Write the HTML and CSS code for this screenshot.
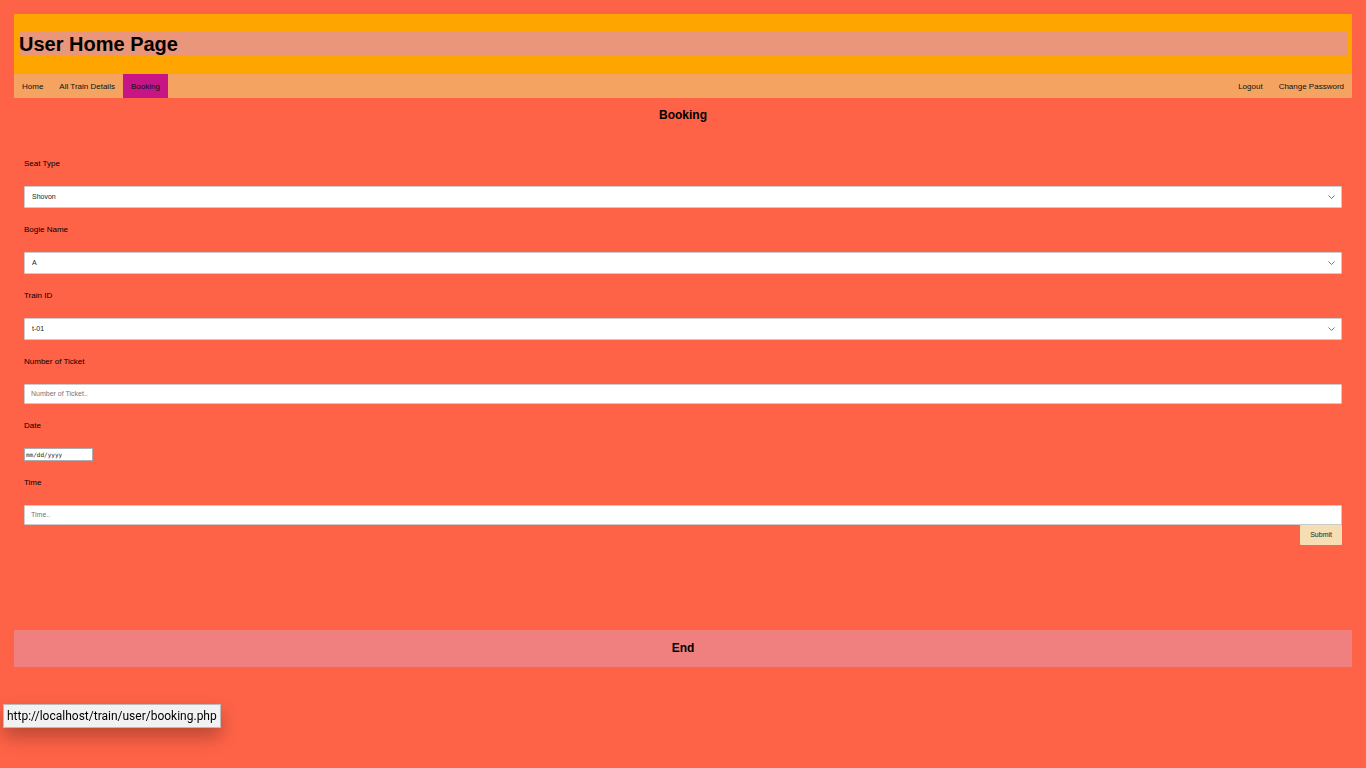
FILE: index.html
```html
<!DOCTYPE html>
<html lang="en">
<head>
<meta charset="utf-8">
<title>User Home Page</title>
<link rel="stylesheet" href="styles.css">
</head>
<body>
<header class="header"><h1 class="header-title">User Home Page</h1></header>
<nav class="nav">
  <a class="nav-link" href="#home">Home</a>
  <a class="nav-link" href="#trains">All Train Details</a>
  <a class="nav-link nav-link-active" href="#booking">Booking</a>
  <a class="nav-link nav-link-end" href="#logout">Logout</a>
  <a class="nav-link" href="#password">Change Password</a>
</nav>
<main>
  <h2 class="title">Booking</h2>
  <form class="form">
    <label class="label" for="seat">Seat Type</label>
    <div class="select-box">
      <select class="control select" id="seat"><option>Shovon</option></select>
      <svg class="chevron" viewBox="0 0 7 4"><path d="M.5 .5l3 3 3-3"/></svg>
    </div>
    <label class="label" for="bogie">Bogie Name</label>
    <div class="select-box">
      <select class="control select" id="bogie"><option>A</option></select>
      <svg class="chevron" viewBox="0 0 7 4"><path d="M.5 .5l3 3 3-3"/></svg>
    </div>
    <label class="label" for="train">Train ID</label>
    <div class="select-box">
      <select class="control select" id="train"><option>t-01</option></select>
      <svg class="chevron" viewBox="0 0 7 4"><path d="M.5 .5l3 3 3-3"/></svg>
    </div>
    <label class="label" for="tickets">Number of Ticket</label>
    <input class="control field" id="tickets" type="text" placeholder="Number of Ticket..">
    <label class="label" for="date">Date</label>
    <input class="date" id="date" type="date">
    <label class="label" for="time">Time</label>
    <input class="control field" id="time" type="text" placeholder="Time..">
    <button class="submit" type="submit">Submit</button>
  </form>
</main>
<footer class="footer"><h2 class="footer-title">End</h2></footer>
<div class="status">http://localhost/train/user/booking.php</div>
</body>
</html>
```

FILE: styles.css
```css
* {
  box-sizing: border-box;
}

body {
  margin: 0;
  padding: 14px;
  background: tomato;
  color: #000;
  font: 8px/12px "Liberation Sans", Arial, sans-serif;
}

.header {
  padding: 18px 5px;
  background: orange;
}

.header-title {
  margin: 0;
  background: darksalmon;
  font-size: 20px;
  line-height: 24px;
}

.nav {
  display: flex;
  background: sandybrown;
}

.nav-link {
  padding: 7px 8px 5px;
  color: #111;
  text-decoration: none;
}

.nav-link-active {
  background: mediumvioletred;
}

.nav-link-end {
  margin-left: auto;
}

.title {
  margin: 10px 0 36px;
  font-size: 12px;
  line-height: 14px;
  text-align: center;
}

.form {
  display: flex;
  flex-direction: column;
  padding: 0 10px;
}

.label {
  margin: 16px 0;
}

.form > .label:first-child {
  margin-top: 0;
}

.control {
  display: block;
  width: 100%;
  border: 1px solid #ccc;
  border-radius: 1px;
  background: #fff;
  font: 7px/10px "Liberation Sans", Arial, sans-serif;
}

.select-box {
  position: relative;
}

.select {
  height: 22px;
  padding: 0 7px;
  appearance: none;
  color: #222;
}

.chevron {
  position: absolute;
  top: 9px;
  right: 7px;
  width: 7px;
  height: 4px;
  fill: none;
  stroke: #777;
  pointer-events: none;
}

.field {
  height: 20px;
  padding: 0 6px 1px;
}

.field::placeholder {
  color: #757575;
}

.date {
  width: 69px;
  height: 13px;
  padding: 0 1px;
  border: 1px solid #abadb3;
  background: #fff;
  color: #222;
  font: 6px/10px "DejaVu Sans Mono", monospace;
}

.date::-webkit-calendar-picker-indicator {
  display: none;
}

.date::-webkit-datetime-edit-month-field,
.date::-webkit-datetime-edit-day-field,
.date::-webkit-datetime-edit-year-field,
.date::-webkit-datetime-edit-text {
  padding: 0;
}

.submit {
  align-self: flex-end;
  height: 20px;
  padding: 0 10px;
  border: 0;
  border-radius: 1px;
  background: wheat;
  color: #222;
  font: 7px/10px "Liberation Sans", Arial, sans-serif;
}

.footer {
  margin-top: 85px;
  padding: 10px;
  background: lightcoral;
}

.footer-title {
  margin: 0;
  font-size: 12px;
  line-height: 17px;
  text-align: center;
}

.status {
  position: fixed;
  bottom: 40px;
  left: 3px;
  padding: 1px 3px 0;
  border: 1px solid #bbb;
  background: #f2f2f2;
  box-shadow: 0 9px 18px rgba(0, 0, 0, 0.28);
  font: 12px/21px Roboto, "Open Sans", sans-serif;
}
```
